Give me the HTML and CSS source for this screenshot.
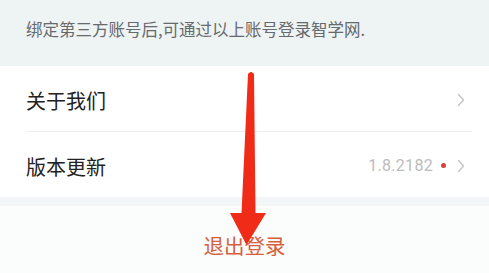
FILE: index.html
```html
<!DOCTYPE html>
<html lang="zh">
<head>
<meta charset="utf-8">
<link rel="stylesheet" href="styles.css">
</head>
<body>
<div class="page">
  <div class="tip">绑定第三方账号后,可通过以上账号登录智学网.</div>
  <div class="list">
    <div class="row">
      <span class="label">关于我们</span>
      <span class="right">
        <svg class="chev" width="8" height="14" viewBox="0 0 8 14"><path d="M1.5 1.5 L6.5 7 L1.5 12.5" fill="none" stroke="#c6c6c6" stroke-width="1.5" stroke-linecap="round" stroke-linejoin="round"/></svg>
      </span>
    </div>
    <div class="divider"></div>
    <div class="row">
      <span class="label">版本更新</span>
      <span class="right">
        <span class="ver">1.8.2182</span>
        <span class="dot"></span>
        <svg class="chev" width="8" height="14" viewBox="0 0 8 14"><path d="M1.5 1.5 L6.5 7 L1.5 12.5" fill="none" stroke="#c6c6c6" stroke-width="1.5" stroke-linecap="round" stroke-linejoin="round"/></svg>
      </span>
    </div>
  </div>
  <div class="band"></div>
  <div class="logout">退出登录</div>
  <svg class="arrow" width="489" height="273" viewBox="0 0 489 273">
    <path d="M248 74 Q251 70 254 74 L255.5 213 L266 213 L246.5 245 L230 213 L241.5 213 Z" fill="#f02c18"/>
  </svg>
</div>
</body>
</html>
```

FILE: styles.css
```css
html, body {
  margin: 0;
  padding: 0;
  background: #fbfcfc;
}
.page {
  position: relative;
  width: 489px;
  height: 273px;
  overflow: hidden;
  font-family: "Noto Sans CJK SC", "Noto Sans", sans-serif;
}
.tip {
  height: 66px;
  box-sizing: border-box;
  padding: 18px 0 0 26px;
  background: #eef3f4;
  color: #666a6c;
  font-size: 16.5px;
  line-height: 22px;
}
.list {
  background: #ffffff;
  padding: 0 17px 0 26px;
}
.row {
  height: 65px;
  display: flex;
  align-items: center;
  justify-content: space-between;
}
.label {
  font-size: 20px;
  color: #222;
  padding-top: 4px;
}
.right {
  display: flex;
  align-items: center;
  padding-top: 2px;
}
.ver {
  font-family: Roboto, "Noto Sans", sans-serif;
  font-size: 16px;
  color: #bcbcbc;
  letter-spacing: 0.3px;
}
.dot {
  width: 5px;
  height: 5px;
  border-radius: 50%;
  background: #d8403a;
  margin: 0 11px 0 8px;
}
.chev {
  display: block;
  margin-right: 7px;
}
.divider {
  height: 1px;
  background: #eeeeee;
}
.band {
  height: 9px;
  background: #f2f6f7;
}
.logout {
  text-align: center;
  color: #d6603c;
  font-size: 20.5px;
  padding-top: 24px;
}
.arrow {
  position: absolute;
  left: 0;
  top: 0;
}
```
